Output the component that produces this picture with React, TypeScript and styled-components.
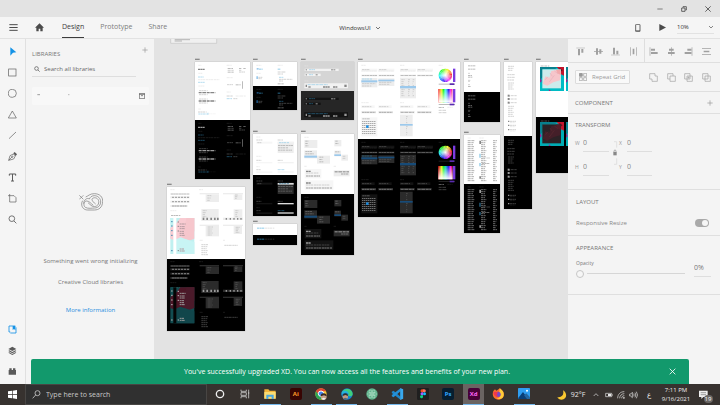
import React from "react";
import styled, { createGlobalStyle, css } from "styled-components";

const GlobalStyle = createGlobalStyle`
  *, *::before, *::after { box-sizing: border-box; }
  body { margin: 0; background: #e3e3e3; }
  body, button, input, select {
    font-family: "Open Sans", "Noto Sans", sans-serif;
    font-size: 6px;
    line-height: 8px;
    color: #4b4b4b;
  }
  button, input, select { margin: 0; padding: 0; border: 0; background: none; outline: none; }
`;

/* ---------- shell ---------- */

const Window = styled.div`
  display: flex;
  flex-direction: column;
  height: 100vh;
  overflow: hidden;
`;

const TitleBar = styled.header`
  display: flex;
  justify-content: flex-end;
  flex: none;
  height: 17px;
  background: #e3e3e3;
`;

const IconButton = styled.button<{ $w?: number }>`
  display: flex;
  align-items: center;
  justify-content: center;
  width: ${(p) => p.$w ?? 24}px;
  height: 100%;
`;

const Icon = styled.svg<{ $w?: number; $h?: number }>`
  display: block;
  flex: none;
  width: ${(p) => p.$w ?? 9}px;
  height: ${(p) => p.$h ?? p.$w ?? 9}px;
  fill: none;
  stroke: currentColor;
  stroke-width: 3;
`;

const MenuBar = styled.nav`
  display: grid;
  grid-template-columns: 1fr auto 1fr;
  flex: none;
  height: 22px;
  background: #f5f5f5;
  border-bottom: 1px solid #e2e2e2;
`;

const MenuGroup = styled.div<{ $end?: boolean }>`
  display: flex;
  align-items: center;
  ${(p) => p.$end && "justify-content: flex-end; padding-right: 6px;"}
`;

const Tabs = styled.div`
  display: flex;
  align-self: stretch;
  gap: 16px;
  padding-left: 9px;
`;

const Tab = styled.button<{ $active?: boolean }>`
  height: 100%;
  font-size: 7px;
  color: ${(p) => (p.$active ? "#3c3c3c" : "#7d7d7d")};
  border-bottom: 1px solid ${(p) => (p.$active ? "#3c3c3c" : "transparent")};
`;

const DocumentTitle = styled.button`
  display: flex;
  align-items: center;
  gap: 4px;
  color: #333;
`;

const ZoomBox = styled.label`
  display: flex;
  align-items: center;
  width: 37px;
  height: 13px;
  margin-left: 3px;
  border-bottom: 1px solid #e2e2e2;
`;

const ZoomSelect = styled.select`
  flex: 1;
  min-width: 0;
  appearance: none;
  color: #333;
`;

const Workspace = styled.main`
  position: relative;
  display: flex;
  flex: 1;
  min-height: 0;
`;

/* ---------- left side ---------- */

const ToolRail = styled.div`
  display: flex;
  flex-direction: column;
  flex: none;
  width: 26px;
  padding: 2px 0;
  background: #f5f5f5;
  border-right: 1px solid #e0e0e0;
`;

const ToolButton = styled.button<{ $color?: string }>`
  display: flex;
  align-items: center;
  justify-content: center;
  flex: none;
  height: 21px;
  color: ${(p) => p.$color ?? "#5a5a5a"};
`;

const Spacer = styled.div`
  flex: 1;
`;

const LibraryPanel = styled.aside`
  display: flex;
  flex-direction: column;
  flex: none;
  width: 128px;
  padding: 0 5px 0 6px;
  background: #f4f4f4;
`;

const LibraryHead = styled.div`
  display: flex;
  justify-content: space-between;
  height: 22px;
`;

const LibraryTitle = styled.h2`
  margin: 11px 0 0;
  font-size: 6px;
  font-weight: 400;
  line-height: 8px;
  color: #777;
`;

const SearchField = styled.label`
  display: flex;
  align-items: center;
  gap: 4px;
  height: 16px;
  margin-right: 13px;
  padding-left: 2px;
  border-bottom: 1px solid #dedede;
`;

const TextInput = styled.input`
  flex: 1;
  min-width: 0;
  height: 10px;
  &::placeholder { color: #666; opacity: 1; }
`;

const LibraryCard = styled.div`
  display: flex;
  align-items: center;
  justify-content: space-between;
  height: 18px;
  margin-top: 10px;
  padding: 0 3px 0 5px;
  background: #f8f8f8;
  border-radius: 2px;
  color: #707070;
`;

const EmptyState = styled.div`
  display: flex;
  flex-direction: column;
  align-items: center;
  margin-top: 88px;
  color: #777;
`;

const EmptyText = styled.p`
  margin: 40px 0 0;
  line-height: 21px;
  text-align: center;
`;

const MoreLink = styled.a`
  margin-top: 13px;
  color: #2a8fe0;
  text-decoration: none;
`;

/* ---------- canvas ---------- */

const Canvas = styled.section`
  position: relative;
  flex: 1;
  min-width: 0;
  overflow: hidden;
  background: #e3e3e3;
`;

const Artboard = styled.svg<{ $x: number; $y: number; $w: number; $h: number }>`
  position: absolute;
  left: ${(p) => p.$x}px;
  top: ${(p) => p.$y}px;
  width: ${(p) => p.$w}px;
  height: ${(p) => p.$h}px;
`;

/* tones: f faint, m medium, s strong, b blue, p panel, h highlight, w bright field, q quiet panel */
type Tone = "f" | "m" | "s" | "b" | "p" | "h" | "w" | "q";
type Mark = [number, number, number, number, Tone];

const light: Record<Tone, string> = {
  f: "#e2e2e2", m: "#bcbcbc", s: "#868686", b: "#8fcbe8", p: "#ededed", h: "#9cc9ec", w: "#f2f2f2", q: "#f6f6f6",
};
const dark: Record<Tone, string> = {
  f: "#262626", m: "#5a5a5a", s: "#9a9a9a", b: "#28698c", p: "#2b2b2b", h: "#174b78", w: "#dddddd", q: "#131313",
};

function Marks({ list, night }: { list: Mark[]; night: boolean }) {
  const tone = night ? dark : light;
  return (
    <>
      {list.map(([x, y, w, h, t], i) => (
        <line
          key={i}
          x1={x}
          x2={x + w}
          y1={y + h / 2}
          y2={y + h / 2}
          stroke={tone[t]}
          strokeWidth={h}
          strokeDasharray={"fmsb".includes(t) && w > 6 ? "7 1 4 1 9 2" : undefined}
        />
      ))}
    </>
  );
}

/* stacks `n` copies of a mark, `step` apart */
const rows = (x: number, y: number, w: number, h: number, t: Tone, n: number, step: number): Mark[] =>
  Array.from({ length: n }, (_, i) => [x, y + i * step, w - ((i * 7) % 5), h, t] as Mark);

const shapesMarks: Mark[] = [
  [10, 9, 9, 2, "f"], [95, 9, 15, 2, "f"], [9, 20, 20, 4, "s"], [98, 18, 16, 3, "m"], [132, 18, 7, 3, "m"],
  [145, 18, 7, 3, "m"], [98, 24, 18, 2, "m"], [132, 24, 7, 2, "m"], [98, 29, 18, 3, "m"], [132, 29, 18, 2, "m"],
  [10, 33, 13, 2, "f"], [9, 44, 17, 2, "b"], [9, 52, 64, 2, "f"], [9, 60, 20, 2, "b"], [95, 46, 18, 2, "f"],
  [10, 71, 18, 2, "f"], [141, 58, 3, 22, "m"], [96, 67, 18, 2, "m"], [122, 67, 15, 3, "m"], [12, 85, 26, 2, "m"],
  [11, 90, 50, 4, "s"], [12, 97, 26, 2, "m"], [12, 110, 26, 2, "m"], [11, 115, 50, 4, "s"], [12, 122, 26, 2, "m"],
  [95, 89, 13, 2, "f"], [95, 101, 18, 2, "m"], [122, 101, 30, 2, "f"], [95, 109, 16, 2, "b"], [115, 109, 12, 2, "m"],
  [10, 140, 8, 2, "f"], [9, 149, 26, 2, "m"], [10, 155, 28, 2, "b"], [38, 152, 2, 6, "b"], [40, 155, 22, 1, "f"],
];

const buttonMarks: Mark[] = [
  [10, 9, 15, 2, "f"], [74, 9, 15, 2, "f"], [11, 18, 6, 5, "h"], [18, 20, 11, 3, "b"], [74, 20, 9, 3, "b"],
  [10, 33, 14, 2, "f"], [74, 29, 25, 2, "m"], [74, 35, 16, 2, "m"], [10, 43, 5, 8, "h"], [16, 45, 12, 2, "m"],
  [16, 49, 10, 2, "m"], [78, 45, 14, 2, "b"], [78, 51, 40, 2, "m"], [78, 56, 12, 2, "m"], [74, 64, 18, 3, "m"],
];

const barMarks: Mark[] = [
  [10, 11, 12, 2, "f"], [11, 20, 102, 7, "w"], [14, 22, 4, 3, "s"], [24, 22, 18, 2, "b"], [90, 22, 14, 3, "s"],
  [11, 35, 48, 7, "w"], [14, 37, 4, 3, "s"], [24, 37, 12, 2, "b"], [44, 37, 6, 3, "s"], [10, 56, 14, 2, "f"],
  [10, 64, 131, 15, "w"], [20, 67, 60, 2, "b"], [14, 68, 4, 7, "s"], [22, 73, 8, 4, "s"], [66, 73, 20, 4, "s"],
  [96, 73, 14, 4, "s"], [130, 68, 8, 7, "s"],
];

/* the dark command bars sit on a lighter backdrop, so their fields turn black */
const barMarksNight: Mark[] = barMarks.map(([x, y, w, h, t]) => [x, y, w, h, t === "w" ? "q" : t] as Mark);

const formMarks: Mark[] = [
  [10, 8, 12, 2, "f"], [10, 17, 18, 2, "m"], [10, 23, 48, 6, "q"], [13, 25, 13, 2, "m"], [74, 17, 16, 2, "m"],
  [74, 23, 48, 34, "p"], [74, 24, 48, 5, "w"], [78, 25, 30, 2, "b"], [75, 33, 45, 3, "m"], [75, 40, 30, 3, "m"],
  [75, 47, 42, 3, "m"], [10, 66, 15, 2, "f"], [10, 78, 15, 2, "m"], [10, 84, 48, 4, "q"], [74, 78, 15, 2, "m"],
  [74, 84, 48, 4, "w"], [10, 97, 10, 2, "f"], [10, 106, 14, 2, "m"], [10, 112, 48, 5, "q"], [74, 106, 20, 2, "b"],
  [74, 112, 48, 4, "w"],
];

const menuMarks: Mark[] = [
  [10, 9, 14, 2, "f"], [10, 18, 39, 24, "p"], [13, 20, 9, 3, "m"], [13, 27, 7, 3, "m"], [13, 34, 9, 3, "m"],
  [100, 18, 21, 19, "p"], [103, 20, 7, 3, "m"], [103, 27, 9, 3, "m"], [10, 49, 38, 24, "p"], [13, 51, 20, 3, "m"],
  [13, 58, 26, 3, "m"], [10, 65, 38, 6, "h"], [48, 65, 39, 24, "p"], [55, 68, 12, 3, "m"], [55, 75, 9, 3, "m"],
  [55, 82, 12, 3, "m"], [100, 50, 20, 17, "p"], [102, 52, 14, 3, "m"], [100, 61, 20, 5, "h"], [121, 62, 20, 18, "p"],
  [125, 66, 9, 2, "m"], [125, 72, 9, 2, "m"], [10, 96, 8, 2, "f"], [98, 96, 8, 2, "f"], [11, 105, 50, 28, "q"],
  [15, 110, 15, 4, "s"], [15, 116, 38, 2, "m"], [15, 124, 42, 4, "m"], [98, 109, 48, 18, "p"], [101, 112, 43, 3, "s"],
  [120, 118, 22, 4, "m"], [11, 139, 86, 28, "q"], [15, 145, 15, 4, "s"], [15, 152, 70, 2, "m"], [15, 160, 78, 4, "m"],
];

const linkMarks: Mark[] = [[12, 11, 22, 3, "b"], [36, 11, 28, 3, "f"]];

const appMarks: Mark[] = [
  [10, 7, 14, 2, "f"], [96, 7, 12, 2, "f"], [10, 18, 58, 6, "p"], [12, 20, 54, 2, "m"], [10, 28, 58, 6, "p"],
  ...[16, 25, 34, 43, 52, 61].map((x) => [x, 29, 4, 4, "s"] as Mark), [10, 41, 58, 6, "p"],
  ...[16, 25, 34, 43, 52, 61].map((x) => [x, 42, 4, 4, "s"] as Mark), [10, 54, 52, 6, "p"], [15, 55, 44, 4, "m"],
  [10, 70, 18, 2, "f"], [12, 84, 28, 3, "m"], [98, 18, 58, 4, "p"], [116, 22, 40, 23, "p"],
  ...rows(121, 25, 12, 2, "m", 3, 7), [168, 18, 60, 4, "p"], [200, 22, 26, 17, "p"], ...rows(204, 23, 9, 2, "m", 3, 5),
  [103, 66, 52, 36, "p"], ...rows(107, 70, 12, 2, "m", 4, 6), [200, 67, 26, 28, "p"], ...rows(205, 70, 9, 2, "m", 4, 6),
  ...[107, 118, 130, 141, 150].map((x) => [x, 92, 5, 7, "s"] as Mark), [168, 92, 60, 7, "p"],
  ...[176, 188, 199, 210, 220].map((x) => [x, 93, 4, 5, "s"] as Mark), [98, 113, 58, 4, "p"], [116, 117, 40, 31, "p"],
  ...rows(122, 119, 16, 2, "m", 5, 6), [168, 113, 60, 4, "p"], [200, 117, 25, 24, "p"], ...rows(206, 120, 12, 2, "m", 4, 5),
  [98, 159, 10, 2, "f"], [168, 159, 6, 2, "f"], ...rows(103, 172, 20, 2, "m", 6, 6), [172, 174, 40, 2, "m"],
];

const pickerMarks: Mark[] = [
  [10, 9, 14, 2, "f"], [126, 9, 14, 2, "f"], [242, 9, 12, 2, "f"],
  ...[10, 61, 126, 177].flatMap((x) => [
    [x, 20, 48, 8, "q"], [x + 2, 22, 24, 2, "m"], [x, 26, 48, 2, "f"], [x, 38, 48, 5, "p"], [x + 2, 39, 45, 3, "m"],
  ] as Mark[]),
  [10, 48, 48, 28, "p"], [10, 55, 48, 6, "h"], [12, 50, 30, 2, "b"], [12, 64, 40, 2, "m"], [12, 71, 28, 2, "m"],
  [61, 49, 48, 23, "p"], [61, 53, 48, 5, "h"], [63, 60, 38, 2, "m"], [63, 66, 32, 2, "m"],
  [126, 47, 48, 62, "p"], ...rows(130, 52, 10, 2, "m", 9, 6), ...rows(150, 52, 6, 2, "m", 9, 6),
  ...rows(164, 52, 5, 2, "m", 9, 6), [126, 72, 48, 7, "h"], [10, 121, 22, 2, "f"], [126, 121, 13, 2, "f"],
  ...[10, 61, 126, 177].flatMap((x) => [
    [x, 130, 40, 8, "q"], [x + 2, 133, 28, 2, "m"], [x, 147, 44, 7, "p"], [x + 2, 150, 40, 2, "s"],
  ] as Mark[]),
  [10, 166, 48, 57, "q"], [13, 169, 22, 3, "m"],
  ...Array.from({ length: 7 }, (_, r) => r).flatMap((r) => Array.from({ length: 7 }, (_, c) => [13 + c * 6, 177 + r * 6, 3, 3, "s"] as Mark)),
  [126, 158, 38, 65, "p"], ...rows(144, 163, 5, 2, "m", 10, 6), [126, 186, 38, 5, "h"],
];

const typeMarks: Mark[] = [
  [12, 10, 22, 3, "m"], [12, 20, 24, 3, "m"], [12, 33, 6, 2, "m"], [12, 39, 12, 3, "m"], [12, 44, 14, 3, "m"],
  [12, 54, 7, 2, "m"], [12, 57, 6, 2, "m"], [12, 67, 6, 2, "m"], [12, 72, 9, 3, "m"],
];

const tableMarks: Mark[] = [
  [11, 8, 10, 2, "f"], [46, 8, 14, 2, "f"], ...rows(11, 16, 20, 2, "s", 21, 6), ...rows(51, 16, 16, 2, "s", 21, 6),
  ...rows(87, 16, 12, 2, "s", 21, 6), [46, 17, 5, 10, "s"], [46, 56, 4, 12, "b"], [56, 68, 24, 2, "m"],
  [54, 84, 24, 3, "m"], [46, 84, 4, 10, "b"], [46, 124, 5, 7, "s"],
];

const listMarks: Mark[] = [
  ...rows(12, 12, 18, 2, "m", 3, 6), ...rows(10, 37, 24, 2, "m", 3, 8), ...rows(12, 62, 18, 2, "m", 4, 6),
  ...[98, 108, 119].flatMap((y) => [[11, y, 6, 6, "s"], [20, y + 2, 18, 2, "m"]] as Mark[]),
  ...rows(12, 132, 18, 2, "m", 6, 6),
  ...[176, 188, 201].flatMap((y) => [[12, y, 4, 4, "s"], [18, y + 1, 18, 2, "m"], [18, y + 5, 16, 2, "f"]] as Mark[]),
];

function ColorPicker({ night }: { night: boolean }) {
  const hues = Array.from({ length: 24 }, (_, i) => i * 15);
  const at = (a: number) => `${262 + 20 * Math.cos((a * Math.PI) / 180)} ${40 + 20 * Math.sin((a * Math.PI) / 180)}`;
  const bar = night ? "#222" : "#bbb";
  return (
    <>
      {hues.map((h) => (
        <path key={h} d={`M262 40L${at(-h)}A20 20 0 0 0 ${at(-h - 16)}Z`} fill={`hsl(${h} 95% 55%)`} />
      ))}
      <circle cx="262" cy="40" r="20" fill="url(#wheelGlow)" />
      <rect x="285" y="20" width="7" height="40" fill="#7a3be0" />
      <rect x="242" y="65" width="49" height="3" fill={bar} />
      <rect x="275" y="64" width="14" height="5" fill="#5a2bb0" />
      {hues.slice(0, 12).map((h, i) => (
        <rect key={h} x={241 + i * 3.5} y="81" width="4" height="40" fill={`hsl(${i * 30} 90% 52%)`} />
      ))}
      <rect x="241" y="81" width="43" height="40" fill="url(#fade)" />
      <rect x="285" y="81" width="7" height="40" fill="#7a3be0" />
      <rect x="242" y="126" width="49" height="3" fill={bar} />
      <rect x="275" y="125" width="14" height="5" fill="#5a2bb0" />
      <Marks night={night} list={[[242, 135, 16, 3, "m"], [268, 135, 16, 2, "f"], [242, 144, 22, 2, "m"], [242, 151, 25, 2, "m"]]} />
      <circle cx="28" cy="194" r="4" fill="#168fe8" />
    </>
  );
}

function Wallpaper({ night }: { night: boolean }) {
  const y = night ? 85 : 93;
  return (
    <g transform={`translate(10 ${y})`}>
      <path d="M0 0H72V108H0Z" fill={night ? "#124c50" : "#c0f0f0"} />
      <path d="M0 30L16 18L30 0H72V40L48 62L28 72L0 62Z" fill={night ? "#4c1626" : "#f9cbd2"} />
      <path d="M48 0H72V62L56 68L36 60Z" fill={night ? "#4a1a2a" : "#f6c6cc"} />
      <path d="M0 0H12L0 18ZM12 66L30 58L72 72V108H12Z" fill={night ? "#11464b" : "#c8f4f4"} />
      <path d="M9 0H18V108H9Z" fill={night ? "#050505" : "#ffffff"} />
      <path d="M2 11H7M2 24H7M2 38H7M2 52H7M2 98H7" stroke={night ? "#aaa" : "#5591b5"} strokeWidth="3" />
      <path d="M22 12H26M22 25H26M22 39H26M22 98H26" stroke={night ? "#bbb" : "#888"} strokeWidth="3" />
      <path d="M28 18H46M28 26H44M28 32H44M28 40H42M28 46H42M28 52H44M28 93H42M28 99H44" stroke={night ? "#999" : "#b39a9f"} strokeWidth="3" strokeDasharray="6 1" />
    </g>
  );
}

function AcrylicSample({ night }: { night: boolean }) {
  return (
    <>
      <path d="M14 12H40" stroke={night ? "#777" : "#999"} strokeWidth="2" strokeDasharray="9 2" />
      {[12, 90].map((x) => (
        <g key={x} transform={`translate(${x} 15)`}>
          <path d="M0 0H72V72H0Z" fill={night ? "#00acb4" : "#00bcc4"} />
          <path d="M0 0H52L46 6H8V30L0 40Z" fill="#08808e" />
          <path d="M50 0H72V26L62 21L58 9Z" fill="#c4142c" />
          <path d="M58 2L68 10L60 16Z" fill="#5c1520" />
          <path d="M0 34L5 40L3 47L0 44ZM26 66L33 72H27Z" fill="#9a2390" />
          <path d="M7 7H63V64H7Z" fill={night ? "#2c2226" : "#ccebec"} />
          <path d="M8 50L16 28L28 32L34 12L54 8L62 18L60 40L40 46L22 56Z" fill={night ? "#441f29" : "#f6c6cb"} />
          <path d="M48 8H62V24L52 19Z" fill={night ? "#541d28" : "#f2a9ac"} />
          <path d="M16 38L24 29M28 45L43 25M43 12L54 20M30 18L37 28" stroke={night ? "#5a2931" : "#e6b0bb"} strokeWidth="2" />
        </g>
      ))}
    </>
  );
}

interface Board {
  name: string;
  x: number;
  y: number;
  w: number;
  top: number;
  bottom: number;
  marks: Mark[];
  nightMarks?: Mark[];
  fills?: [string, string];
  Extra?: React.ComponentType<{ night: boolean }>;
}

/* positions in canvas pixels */
const boards: Board[] = [
  { name: "Basic inputs", x: 41, y: 23, w: 55, top: 58, bottom: 59, marks: shapesMarks },
  { name: "Buttons", x: 99, y: 23, w: 44, top: 24, bottom: 24, marks: buttonMarks },
  { name: "Command bars", x: 147, y: 23, w: 53, top: 29, bottom: 29, marks: barMarks, nightMarks: barMarksNight, fills: ["#d5d5d5", "#262626"] },
  { name: "Forms", x: 99, y: 95, w: 44, top: 41, bottom: 41, marks: formMarks },
  { name: "Menus", x: 147, y: 95, w: 53, top: 60, bottom: 61, marks: menuMarks },
  { name: "Links", x: 99, y: 185, w: 44, top: 11, bottom: 10, marks: linkMarks },
  { name: "App patterns", x: 13, y: 148, w: 78, top: 72, bottom: 72, marks: appMarks, Extra: Wallpaper },
  { name: "Pickers", x: 204, y: 23, w: 102, top: 77, bottom: 78, marks: pickerMarks, Extra: ColorPicker },
  { name: "Typography", x: 310, y: 23, w: 36, top: 30, bottom: 30, marks: typeMarks },
  { name: "Tables", x: 310, y: 96, w: 36, top: 49, bottom: 49, marks: tableMarks },
  { name: "Lists", x: 350, y: 23, w: 28, top: 74, bottom: 73, marks: listMarks },
  { name: "Materials", x: 382, y: 23, w: 50, top: 55, bottom: 56, marks: [], Extra: AcrylicSample },
];

function BoardView({ name, x, y, w, top, bottom, marks, nightMarks = marks, fills = ["#fff", "#000"], Extra }: Board) {
  const w3 = w * 3;
  return (
    <Artboard
      $x={x - 1}
      $y={y - 4}
      $w={w + 2}
      $h={top + bottom + 5}
      viewBox={`-3 -12 ${w3 + 6} ${(top + bottom + 5) * 3}`}
      role="img"
      aria-label={name}
    >
      <path d="M0 -8H14" stroke="#8a8a8a" strokeWidth="4" />
      <rect x="-1" y="-1" width={w3 + 2} height={(top + bottom) * 3 + 2} fill="#bdbdbd" />
      <rect width={w3} height={top * 3} fill={fills[0]} />
      <rect y={top * 3} width={w3} height={bottom * 3} fill={fills[1]} />
      <Marks list={marks} night={false} />
      {Extra && <Extra night={false} />}
      <g transform={`translate(0 ${top * 3})`}>
        <Marks list={nightMarks} night />
        {Extra && <Extra night />}
      </g>
    </Artboard>
  );
}

/* ---------- property inspector ---------- */

const Inspector = styled.aside`
  flex: none;
  width: 152px;
  background: #f4f4f4;
  color: #888;
`;

const Section = styled.section<{ $h: number; $pad?: string; $row?: boolean }>`
  min-height: ${(p) => p.$h}px;
  padding: ${(p) => p.$pad ?? "0 6px 0 7px"};
  border-bottom: 1px solid #dfdfdf;
  ${(p) => p.$row && css`display: flex; align-items: center; justify-content: space-between;`}
`;

const IconGroup = styled.div<{ $line?: boolean }>`
  display: grid;
  grid-template-columns: repeat(4, 1fr);
  align-items: center;
  flex: 1;
  align-self: stretch;
  padding: ${(p) => (p.$line ? "2px 5px 0 0" : "2px 2px 0 4px")};
  border-left: ${(p) => (p.$line ? "1px solid #dedede" : "0")};
  color: #a0a0a0;
`;

const GroupTitle = styled.h3`
  margin: 0;
  font-size: 6px;
  font-weight: 400;
  line-height: 8px;
  color: #777;
`;

const RepeatButton = styled.button`
  display: flex;
  align-items: center;
  gap: 5px;
  height: 14px;
  padding: 0 4px 0 3px;
  border: 1px solid #dcdcdc;
  border-radius: 1px;
  background: #f9f9f9;
  color: #999;
`;

const BooleanGroup = styled.div`
  display: grid;
  grid-template-columns: repeat(4, 1fr);
  width: 70px;
  height: 100%;
  color: #999;
`;

const TransformGrid = styled.div`
  display: grid;
  grid-template-columns: 34px 10px 33px;
  grid-template-rows: 15px 24px;
  margin-top: 8px;
`;

const Field = styled.label`
  display: flex;
  align-items: flex-end;
  color: #999;
`;

const FieldName = styled.span`
  flex: none;
  width: 8px;
  font-size: 5px;
  line-height: 18px;
`;

const FieldInput = styled.input`
  flex: 1;
  min-width: 0;
  height: 15px;
  padding-bottom: 4px;
  font-size: 7px;
  color: #888;
  border-bottom: 1px solid #dedede;
`;

const LockCell = styled.button`
  grid-row: 1 / 3;
  grid-column: 2;
  display: flex;
  justify-content: center;
  align-items: flex-start;
  padding: 4px 0 0 2px;
  color: #888;
`;

const SwitchRow = styled.label`
  display: flex;
  align-items: center;
  justify-content: space-between;
  margin-top: 13px;
`;

const Switch = styled.input`
  display: inline-grid;
  align-items: center;
  justify-items: end;
  width: 14px;
  height: 8px;
  padding: 0 1px;
  appearance: none;
  border-radius: 4px;
  background: #a9a9a9;
  &::before {
    content: "";
    width: 6px;
    height: 6px;
    border-radius: 3px;
    background: #f6f6f6;
  }
`;

const OpacityRow = styled.div`
  display: flex;
  align-items: flex-end;
  justify-content: space-between;
  margin-top: 7px;
`;

const SliderLabel = styled.label`
  display: flex;
  flex-direction: column;
  gap: 2px;
  flex: 1;
  margin-right: 9px;
  font-size: 5px;
  color: #777;
`;

const Slider = styled.input`
  width: 100%;
  height: 9px;
  appearance: none;
  background: linear-gradient(#d6d6d6, #d6d6d6) right center / calc(100% - 11px) 1px no-repeat;
  &::-webkit-slider-thumb {
    width: 8px;
    height: 8px;
    appearance: none;
    border: 1px solid #c6c6c6;
    border-radius: 50%;
    background: #f6f6f6;
  }
`;

const PercentInput = styled.input`
  width: 17px;
  height: 15px;
  margin-bottom: 1px;
  padding-bottom: 4px;
  border-bottom: 1px solid #dedede;
  font-size: 7px;
  color: #777;
`;

/* ---------- toast ---------- */

const Toast = styled.div`
  position: absolute;
  right: 31px;
  bottom: 0;
  left: 31px;
  display: flex;
  align-items: center;
  height: 25px;
  padding-left: 8px;
  border-radius: 2px 2px 0 0;
  background: #12996c;
  color: #fff;
  font-size: 7px;
`;

const ToastText = styled.span`
  flex: 1;
  text-align: center;
`;

/* ---------- taskbar ---------- */

const Taskbar = styled.footer`
  display: flex;
  flex: none;
  height: 21px;
  background: #37322f;
  color: #eee;
`;

const TaskSearch = styled.label`
  display: flex;
  align-items: center;
  gap: 5px;
  flex: 0 1 182px;
  padding-left: 6px;
  border: 1px solid #484644;
  background: #303030;
`;

const TaskInput = styled(TextInput)`
  height: 12px;
  font-size: 7px;
  &::placeholder { color: #c8c8c8; opacity: 1; }
`;

const TaskApps = styled.div`
  display: grid;
  grid-template-columns: repeat(13, 1fr);
  flex: 0 1 330px;
`;

const TaskApp = styled.button<{ $open?: boolean; $active?: boolean }>`
  display: flex;
  align-items: center;
  justify-content: center;
  margin: 0 2px;
  color: #eee;
  background: ${(p) => (p.$active ? "#6a6462" : "transparent")};
  border-bottom: 1px solid ${(p) => (p.$open ? "#76b9ed" : "transparent")};
`;

const AppTile = styled.span<{ $bg: string; $fg: string }>`
  width: 12px;
  height: 12px;
  border-radius: 2px;
  background: ${(p) => p.$bg};
  color: ${(p) => p.$fg};
  font-size: 6px;
  font-weight: 700;
  line-height: 12px;
  text-align: center;
`;

const Tray = styled.div`
  display: flex;
  align-items: center;
  justify-content: flex-end;
  flex: 1;
  padding-right: 8px;
`;

const TrayButton = styled.button<{ $w: number }>`
  display: flex;
  align-items: center;
  justify-content: center;
  flex: none;
  gap: 4px;
  width: ${(p) => p.$w}px;
  height: 100%;
  font-size: 7px;
  color: #e8e8e8;
`;

const Clock = styled.time`
  flex: none;
  width: 36px;
  line-height: 9px;
  text-align: center;
`;

const Bubble = styled.span`
  position: relative;
`;

const Badge = styled.span`
  position: absolute;
  right: -5px;
  bottom: -4px;
  width: 9px;
  height: 8px;
  border-radius: 4px;
  background: #6b6765;
  color: #fff;
  font-size: 6px;
  line-height: 8px;
  text-align: center;
`;

/* ---------- icons ---------- */

const tools: { name: string; color?: string; art: React.ReactNode }[] = [
  { name: "Select", color: "#1492e6", art: <path d="M7 1L25 16L15 17L7 26Z" fill="currentColor" stroke="none" /> },
  { name: "Rectangle", art: <rect x="2" y="3" width="22" height="21" strokeWidth="2" /> },
  { name: "Ellipse", art: <circle cx="13" cy="13" r="12" strokeWidth="2" /> },
  { name: "Polygon", art: <path d="M13 3L25 24H1Z" strokeWidth="2" /> },
  { name: "Line", art: <path d="M3 23L24 3" strokeWidth="2" /> },
  {
    name: "Pen",
    art: (
      <>
        <path d="M2 25L6 11L16 6L22 12L17 21Z M2 25L12 15" strokeWidth="2" />
        <path d="M16 4L20 0L27 7L23 12Z" fill="currentColor" stroke="none" />
        <circle cx="13" cy="14" r="2" strokeWidth="2" />
      </>
    ),
  },
  { name: "Text", art: <path d="M4 8V3H23V8M13.500 3V24M9 24H18" /> },
  { name: "Artboard", art: <path d="M0 5H18L24 11V24H5V0" strokeWidth="2" /> },
  { name: "Zoom", art: <path d="M18 18L25 25M20 11A8.500 8.500 0 1 1 3 11A8.500 8.500 0 1 1 20 11Z" strokeWidth="2.500" /> },
];

const railPanels: { name: string; color?: string; art: React.ReactNode }[] = [
  {
    name: "Libraries",
    color: "#1492e6",
    art: <><path d="M3 21V3H22M7 24H24V7M3 21H7" strokeWidth="2.500" /><path d="M14 3H22V16L18 12L14 15Z" fill="currentColor" stroke="none" /></>,
  },
  { name: "Layers", art: <path d="M13 2L25 9L13 15L1 9ZM4 13L13 18L22 13L25 15L13 22L1 15ZM4 19L1 20L13 27L25 20L22 19L13 24Z" fill="currentColor" stroke="none" /> },
  { name: "Plugins", art: <path d="M2 9H4V4H11V9H15V4H22V9H24V23H2Z" fill="currentColor" stroke="none" /> },
];

/* filled bars next to a thin guide line */
const alignVertical: [string, string][] = [
  ["Align top", "M1 2H27V4H1ZM6 6H12V25H6ZM16 6H22V17H16Z"],
  ["Align middle", "M0 12H27V14H0ZM6 4H12V23H6ZM16 7H22V20H16Z"],
  ["Align bottom", "M0 23H27V25H0ZM6 2H12V22H6ZM16 11H22V22H16Z"],
  ["Distribute horizontally", "M4 1H6V26H4ZM21 1H23V26H21ZM11 5H16V22H11Z"],
];
const alignHorizontal: [string, string][] = [
  ["Align left", "M2 1H4V26H2ZM6 5H18V11H6ZM6 15H26V21H6Z"],
  ["Align center", "M12 1H14V26H12ZM6 5H20V11H6ZM3 15H23V21H3Z"],
  ["Align right", "M23 1H25V26H23ZM10 5H22V11H10ZM2 15H22V21H2Z"],
  ["Distribute vertically", "M0 4H27V6H0ZM0 21H27V23H0ZM5 11H22V16H5Z"],
];
const booleans: [string, string][] = [
  ["Add", "M2 2H18V9H25V25H9V18H2Z"],
  ["Subtract", "M9 18H2V2H18V9M9 9H25V25H9Z"],
  ["Intersect", "M2 2H18V18H2ZM9 9H25V25H9ZM12 12H15V15H12Z"],
  ["Exclude overlap", "M2 2H18V18H2ZM9 9H25V25H9Z"],
];

const Chevron = ({ up }: { up?: boolean }) => (
  <Icon $w={6} viewBox="0 0 18 18"><path d={up ? "M2 12L9 5L16 12" : "M3 6L9 12L15 6"} strokeWidth="2" /></Icon>
);

const apps: { name: string; open?: boolean; active?: boolean; art: React.ReactNode }[] = [
  { name: "Cortana", art: <Icon $w={10} viewBox="0 0 30 30"><circle cx="15" cy="15" r="11" strokeWidth="4" /></Icon> },
  { name: "Task view", art: <Icon $w={10} viewBox="0 0 30 30"><path d="M3 2V7H19V2M3 28V23H19V28M3 11H19V19H3ZM26 2V28M24 12H28" strokeWidth="2" /></Icon> },
  {
    name: "File Explorer", open: true,
    art: (
      <Icon $w={12} viewBox="0 0 36 36" stroke="none">
        <path d="M1 4H13L17 8H35V32H1Z" fill="#f3b63b" stroke="none" />
        <path d="M1 12H35V32H1Z" fill="#fbdc72" stroke="none" />
        <path d="M7 20H29V33H23V26H13V33H7Z" fill="#4aa7e0" stroke="none" />
      </Icon>
    ),
  },
  { name: "Illustrator", art: <AppTile $bg="#380503" $fg="#ff9a2a">Ai</AppTile> },
  {
    name: "Chrome", open: true,
    art: (
      <Icon $w={12} viewBox="0 0 36 36">
        <circle cx="18" cy="18" r="17" fill="#f8c93a" stroke="none" />
        <path d="M3 10A17 17 0 0 1 33 10H18L11 21Z" fill="#e34334" stroke="none" />
        <path d="M3 10A17 17 0 0 0 18 35L24 24L11 20Z" fill="#2ca653" stroke="none" />
        <circle cx="18" cy="17" r="8" fill="#3f81ed" stroke="#fff" />
        <circle cx="26" cy="26" r="9" fill="#c9a48b" stroke="none" />
        <path d="M17 25A9 9 0 0 1 35 25L27 22Z" fill="#3a2a26" stroke="none" />
        <path d="M19 32L26 29L33 32L28 35H23Z" fill="#f0f0f0" stroke="none" />
      </Icon>
    ),
  },
  {
    name: "Edge", open: true,
    art: (
      <Icon $w={12} viewBox="0 0 36 36">
        <circle cx="18" cy="18" r="17" fill="#1683ce" stroke="none" />
        <path d="M3 12A17 17 0 0 1 35 18C35 27 23 26 21 22C25 17 18 9 3 12Z" fill="#3fcf7c" stroke="none" />
        <path d="M2 13C8 5 25 8 23 20C19 12 6 13 2 22Z" fill="#27b5d9" stroke="none" />
        <circle cx="13" cy="26" r="8" fill="#c49a80" stroke="none" />
        <path d="M5 24A8 8 0 0 1 21 24L13 21Z" fill="#33302f" stroke="none" />
        <path d="M6 32L13 29L20 32L16 35H9Z" fill="#4a6b85" stroke="none" />
      </Icon>
    ),
  },
  {
    name: "Atom",
    art: (
      <Icon $w={12} viewBox="0 0 36 36">
        <circle cx="18" cy="18" r="17" fill="#5fb38c" stroke="none" />
        <g stroke="#d9f3e4" strokeWidth="1">
          <ellipse cx="18" cy="18" rx="14" ry="5" />
          <ellipse cx="18" cy="18" rx="14" ry="5" transform="rotate(60 18 18)" />
          <ellipse cx="18" cy="18" rx="14" ry="5" transform="rotate(120 18 18)" />
        </g>
        <circle cx="18" cy="18" r="2" fill="#e9fff2" stroke="none" />
      </Icon>
    ),
  },
  {
    name: "Visual Studio Code", open: true,
    art: (
      <Icon $w={13} $h={12} viewBox="0 0 36 36">
        <path d="M1 11L6 8L27 26V35L1 15Z" fill="#1e86cc" stroke="none" />
        <path d="M1 25L6 28L27 10V1L1 21Z" fill="#2490d8" stroke="none" />
        <path d="M26 0L35 4V32L26 36Z" fill="#38a9ef" stroke="none" />
      </Icon>
    ),
  },
  {
    name: "Figma",
    art: (
      <Icon $w={12} viewBox="0 0 36 36">
        <rect width="36" height="36" rx="4" fill="#1f1f1f" stroke="none" />
        <path d="M18 4H15A4.500 4.500 0 0 0 15 13H18Z" fill="#f24e1e" stroke="none" />
        <path d="M18 4H22A4.500 4.500 0 0 1 22 13H18Z" fill="#ff7262" stroke="none" />
        <path d="M18 13H15A4.500 4.500 0 0 0 15 22H18Z" fill="#a259ff" stroke="none" />
        <circle cx="22.500" cy="17.500" r="4.500" fill="#1abcfe" stroke="none" />
        <path d="M18 22H15A4.500 4.500 0 1 0 18 27Z" fill="#0acf83" stroke="none" />
      </Icon>
    ),
  },
  { name: "Photoshop", art: <AppTile $bg="#061e30" $fg="#31a8ff">Ps</AppTile> },
  { name: "XD", open: true, active: true, art: <AppTile $bg="#470137" $fg="#ff61f6">Xd</AppTile> },
  {
    name: "Firefox",
    art: (
      <Icon $w={13} $h={12} viewBox="0 0 39 36">
        <path d="M4 9L9 4L13 8L24 1L33 10C40 22 32 35 19 35C5 35 -1 21 4 9Z" fill="#fb6c2b" stroke="none" />
        <path d="M23 1C31 6 37 13 35 23C32 34 20 35 14 30C25 31 28 20 22 14Z" fill="#ffcc39" stroke="none" />
        <circle cx="18" cy="19" r="8" fill="#7647c9" stroke="none" />
        <path d="M4 13C10 9 16 12 19 15C13 16 13 22 19 25C10 29 4 21 4 13Z" fill="#ef3850" stroke="none" />
      </Icon>
    ),
  },
  {
    name: "Photos", open: true,
    art: (
      <Icon $w={12} viewBox="0 0 36 36">
        <rect width="36" height="33" rx="2" fill="#2f9df0" stroke="none" />
        <path d="M0 31L15 12L31 33H2Z" fill="#093f78" stroke="none" />
        <path d="M18 22L25 16L36 28V33H27Z" fill="#2465a0" stroke="none" />
        <circle cx="27" cy="8" r="3" fill="#fff" stroke="none" />
      </Icon>
    ),
  },
];

/* ---------- page ---------- */

export default function App() {
  return (
    <>
      <GlobalStyle />
      <Window>
        <TitleBar>
          <IconButton aria-label="Minimize"><Icon $w={6} viewBox="0 0 18 18"><path d="M1 9H17" strokeWidth="2" /></Icon></IconButton>
          <IconButton aria-label="Restore"><Icon $w={6} viewBox="0 0 18 18"><path d="M2 6H12V16H2ZM6 5V2H16V12H13" strokeWidth="2.500" /></Icon></IconButton>
          <IconButton aria-label="Close"><Icon $w={6} viewBox="0 0 18 18"><path d="M1 1L17 17M17 1L1 17" strokeWidth="2.500" /></Icon></IconButton>
        </TitleBar>

        <MenuBar>
          <MenuGroup>
            <IconButton $w={26} aria-label="Menu"><Icon viewBox="0 0 27 27"><path d="M1 5H26M1 13.500H26M1 22H26" /></Icon></IconButton>
            <IconButton $w={27} aria-label="Home"><Icon viewBox="0 0 27 27"><path d="M13.500 1L27 14H23V25H16V17H11V25H4V14H0Z" fill="currentColor" stroke="none" /></Icon></IconButton>
            <Tabs>
              <Tab $active>Design</Tab>
              <Tab>Prototype</Tab>
              <Tab>Share</Tab>
            </Tabs>
          </MenuGroup>
          <DocumentTitle>WindowsUI <Chevron /></DocumentTitle>
          <MenuGroup $end>
            <IconButton aria-label="Device preview"><Icon $w={6} $h={8} viewBox="0 0 18 24"><rect x="2" y="1" width="13" height="22" rx="2" strokeWidth="2.500" /><path d="M2 20H15" strokeWidth="2" /></Icon></IconButton>
            <IconButton aria-label="Play"><Icon $w={7} viewBox="0 0 21 21"><path d="M1 0L21 10.500L1 21Z" fill="currentColor" stroke="none" /></Icon></IconButton>
            <ZoomBox>
              <ZoomSelect aria-label="Zoom level" defaultValue="10%">
                <option>10%</option>
                <option>50%</option>
                <option>100%</option>
              </ZoomSelect>
              <Chevron />
            </ZoomBox>
          </MenuGroup>
        </MenuBar>

        <Workspace>
          <ToolRail>
            {tools.map((t) => (
              <ToolButton key={t.name} $color={t.color} aria-label={t.name}><Icon viewBox="0 0 27 27">{t.art}</Icon></ToolButton>
            ))}
            <Spacer />
            {railPanels.map((t) => (
              <ToolButton key={t.name} $color={t.color} aria-label={t.name}><Icon viewBox="0 0 27 27">{t.art}</Icon></ToolButton>
            ))}
          </ToolRail>

          <LibraryPanel>
            <LibraryHead>
              <LibraryTitle>LIBRARIES</LibraryTitle>
              <IconButton $w={8} aria-label="Add library"><Icon $w={6} viewBox="0 0 18 18" color="#999"><path d="M9 1V17M1 9H17" strokeWidth="2" /></Icon></IconButton>
            </LibraryHead>
            <SearchField>
              <Icon $w={6} viewBox="0 0 18 18"><path d="M12 12L17 17M13 7.500A5.500 5.500 0 1 1 2 7.500A5.500 5.500 0 1 1 13 7.500Z" strokeWidth="2" /></Icon>
              <TextInput aria-label="Search all libraries" placeholder="Search all libraries" />
            </SearchField>
            <LibraryCard>
              <Icon $w={36} $h={6} viewBox="0 0 108 18"><path d="M1 5H9M94 5H97" strokeWidth="2" /></Icon>
              <IconButton $w={8} aria-label="Library details"><Icon $w={6} viewBox="0 0 18 18"><path d="M1 1H17V17H1ZM1 4H17M6 8H12" strokeWidth="2" /></Icon></IconButton>
            </LibraryCard>
            <EmptyState>
              <Icon $w={24} $h={18} viewBox="0 0 72 54">
                <path d="M1 7L13 19M13 7L1 19" strokeWidth="2" />
                <path d="M20 12C28 9 32 2 46 2C62 2 72 12 71 26C70 43 60 51 46 51H26C15 51 8 43 8 33C8 29 9 26 11 23" strokeWidth="2" />
                <path d="M43 37C36 32 31 24 23 24C14 24 12 38 19 43C27 48 40 45 47 45C58 45 65 36 65 27C65 15 56 8 46 8C38 8 33 13 31 18C24 13 14 21 14 32" strokeWidth="2" />
                <path d="M27 29L36 37C44 44 57 41 59 30C61 18 51 12 43 15C36 18 39 23 46 30L50 33" strokeWidth="2" />
              </Icon>
              <EmptyText>Something went wrong initializing<br />Creative Cloud libraries</EmptyText>
              <MoreLink href="#more">More information</MoreLink>
            </EmptyState>
          </LibraryPanel>

          <Canvas>
            <svg width="0" height="0" display="block" aria-hidden="true">
              <defs>
                <radialGradient id="wheelGlow">
                  <stop offset="0" stopColor="#fff" />
                  <stop offset="1" stopColor="#fff" stopOpacity="0" />
                </radialGradient>
                <linearGradient id="fade" x2="0" y2="1">
                  <stop offset="0" stopColor="#fff" stopOpacity="0" />
                  <stop offset="1" stopColor="#fff" />
                </linearGradient>
              </defs>
            </svg>
            <Artboard $x={16} $y={0} $w={48} $h={5} viewBox="0 0 144 15" role="img" aria-label="Cover">
              <path d="M2 -2H140V13H2Z" fill="#f0f0f0" stroke="#c4c4c4" strokeWidth="2" />
              <path d="M14 2H60M14 6H36" stroke="#999" strokeWidth="2" />
            </Artboard>
            {boards.map((b) => <BoardView key={b.name} {...b} />)}
          </Canvas>

          <Inspector>
            <Section $h={24} $pad="0" $row>
              <IconGroup>
                {alignVertical.map(([name, d]) => (
                  <IconButton key={name} $w={17} aria-label={name}><Icon viewBox="0 0 27 27" color="#a0a0a0"><path d={d} fill="currentColor" stroke="none" /></Icon></IconButton>
                ))}
              </IconGroup>
              <IconGroup $line>
                {alignHorizontal.map(([name, d]) => (
                  <IconButton key={name} $w={17} aria-label={name}><Icon viewBox="0 0 27 27" color="#a0a0a0"><path d={d} fill="currentColor" stroke="none" /></Icon></IconButton>
                ))}
              </IconGroup>
            </Section>
            <Section $h={29} $pad="0 5px 0 7px" $row>
              <RepeatButton>
                <Icon $w={8} viewBox="0 0 24 24"><path d="M1 1H10V10H1ZM14 1H23V10H14ZM1 14H10V23H1ZM14 14H23V23H14Z" strokeWidth="2" /><path d="M2 2H9V9H2Z" fill="currentColor" /></Icon>
                Repeat Grid
              </RepeatButton>
              <BooleanGroup>
                {booleans.map(([name, d]) => (
                  <IconButton key={name} $w={17} aria-label={name}><Icon viewBox="0 0 27 27" color="#a0a0a0"><path d={d} strokeWidth="2" /></Icon></IconButton>
                ))}
              </BooleanGroup>
            </Section>
            <Section $h={22} $row>
              <GroupTitle>COMPONENT</GroupTitle>
              <IconButton $w={8} aria-label="Add component"><Icon $w={6} viewBox="0 0 18 18" color="#999"><path d="M9 1V17M1 9H17" strokeWidth="2" /></Icon></IconButton>
            </Section>
            <Section $h={76} $pad="7px 6px 0 7px">
              <GroupTitle>TRANSFORM</GroupTitle>
              <TransformGrid>
                <Field><FieldName>W</FieldName><FieldInput defaultValue="0" /></Field>
                <LockCell aria-label="Lock aspect ratio">
                  <Icon $w={6} $h={24} viewBox="0 0 18 72">
                    <path d="M6 2H14V20M14 52V70H6" stroke="#d8d8d8" strokeWidth="2" />
                    <path d="M6 34V29Q9 24 12 29V34" strokeWidth="2" />
                    <path d="M4 33H14V43H4Z" fill="currentColor" stroke="none" />
                  </Icon>
                </LockCell>
                <Field><FieldName>X</FieldName><FieldInput defaultValue="0" /></Field>
                <Field><FieldName>H</FieldName><FieldInput defaultValue="0" /></Field>
                <Field><FieldName>Y</FieldName><FieldInput defaultValue="0" /></Field>
              </TransformGrid>
            </Section>
            <Section $h={46} $pad="8px 11px 0 8px">
              <GroupTitle>LAYOUT</GroupTitle>
              <SwitchRow>Responsive Resize<Switch type="checkbox" role="switch" defaultChecked /></SwitchRow>
            </Section>
            <Section $h={59} $pad="8px 9px 0 8px">
              <GroupTitle>APPEARANCE</GroupTitle>
              <OpacityRow>
                <SliderLabel>Opacity<Slider type="range" min={0} max={100} defaultValue={0} /></SliderLabel>
                <PercentInput aria-label="Opacity value" defaultValue="0%" />
              </OpacityRow>
            </Section>
          </Inspector>

          <Toast role="status">
            <ToastText>You've successfully upgraded XD. You can now access all the features and benefits of your new plan.</ToastText>
            <IconButton $w={34} aria-label="Dismiss"><Icon $w={7} viewBox="0 0 21 21" color="#fff"><path d="M2 2L19 19M19 2L2 19" strokeWidth="2.500" /></Icon></IconButton>
          </Toast>
        </Workspace>

        <Taskbar>
          <IconButton $w={25} aria-label="Start"><Icon viewBox="0 0 27 27"><path d="M0 4L12 2V13H0ZM14 2L27 0V13H14ZM0 15H12V25L0 23ZM14 15H27V27L14 25Z" fill="#fff" stroke="none" /></Icon></IconButton>
          <TaskSearch>
            <Icon viewBox="0 0 27 27"><path d="M2 25L11 15M24 9.500A7.500 7.500 0 1 1 9 9.500A7.500 7.500 0 1 1 24 9.500Z" strokeWidth="2.500" stroke="#c8c8c8" /></Icon>
            <TaskInput aria-label="Type here to search" placeholder="Type here to search" />
          </TaskSearch>
          <TaskApps>
            {apps.map((a) => (
              <TaskApp key={a.name} $open={a.open} $active={a.active} aria-label={a.name}>{a.art}</TaskApp>
            ))}
          </TaskApps>
          <Tray>
            <TrayButton $w={36}>
              <Icon $w={10} viewBox="0 0 30 30"><path d="M18 1C33 10 29 29 14 29C7 29 3 26 1 21C14 24 22 14 18 1Z" fill="#fcc931" stroke="none" /></Icon>
              92°F
            </TrayButton>
            <TrayButton $w={13} aria-label="Show hidden icons"><Chevron up /></TrayButton>
            <TrayButton $w={13} aria-label="Battery"><Icon $w={8} $h={6} viewBox="0 0 24 18"><path d="M2 4H20V14H2ZM22 7V11" strokeWidth="2" /><path d="M9 6H18V12H9Z" fill="currentColor" stroke="none" /></Icon></TrayButton>
            <TrayButton $w={12} aria-label="Network"><Icon $w={8} viewBox="0 0 24 24"><path d="M2 22C2 10 10 2 22 2M8 22C8 14 14 8 22 8M14 22C14 17 17 14 22 14M19 22V19H22V22Z" strokeWidth="2" /></Icon></TrayButton>
            <TrayButton $w={13} aria-label="Volume"><Icon $w={9} $h={8} viewBox="0 0 27 24"><path d="M2 9H5L10 4V20L5 15H2ZM14 8Q17 12 14 16M18 5Q23 12 18 19M22 2Q29 12 22 22" strokeWidth="2" /></Icon></TrayButton>
            <TrayButton $w={18} aria-label="Input language">ع</TrayButton>
            <Clock>7:11 PM<br />9/16/2021</Clock>
            <TrayButton $w={18} aria-label="Notifications">
              <Bubble>
                <Icon $w={9} viewBox="0 0 27 27"><path d="M0 2H26V21H13L7 27V21H0Z" fill="#eee" stroke="none" /><path d="M5 8H21M5 14H21" stroke="#777" strokeWidth="2" /></Icon>
                <Badge>19</Badge>
              </Bubble>
            </TrayButton>
          </Tray>
        </Taskbar>
      </Window>
    </>
  );
}
